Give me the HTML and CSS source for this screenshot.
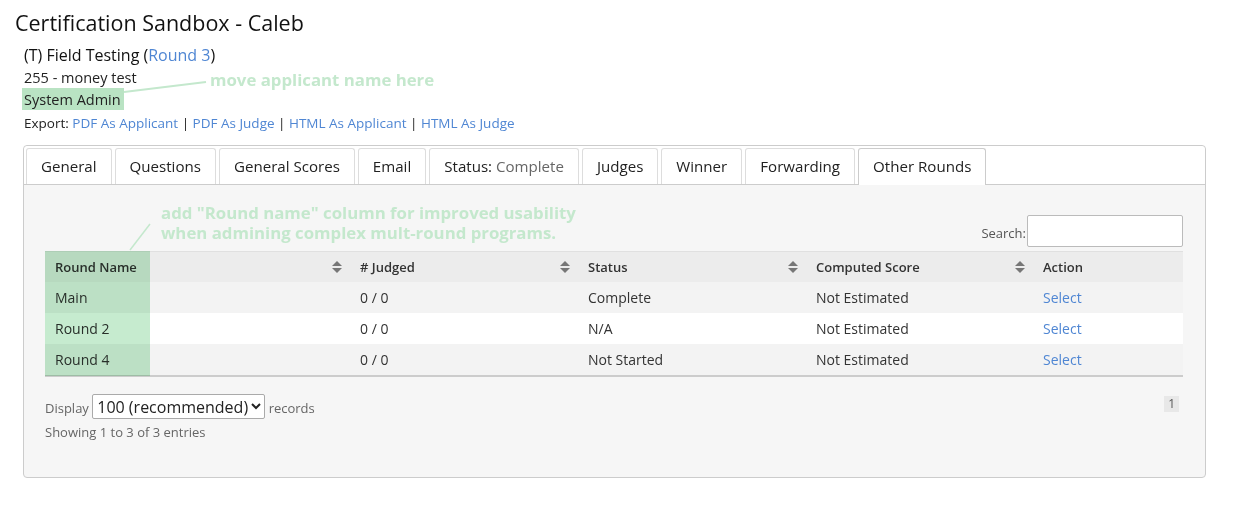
FILE: index.html
```html
<!DOCTYPE html>
<html lang="en">
<head>
    <meta charset="UTF-8">
    <title>Certification Sandbox - Caleb</title>
    <link rel="stylesheet" href="styles.css">
</head>
<body>
    <h1 class="title">Certification Sandbox - Caleb</h1>
    <div class="app-info">
        <h2>(T) Field Testing (<a href="#">Round 3</a>)</h2>
        <p>255 - money test</p>
        <p><span class="highlight">System Admin</span></p>
        <p class="export">Export: <a href="#">PDF As Applicant</a> | <a href="#">PDF As Judge</a> | <a href="#">HTML As Applicant</a> | <a href="#">HTML As Judge</a></p>
        <!-- annotation -->
        <svg class="note-line note-line-1" width="86" height="14"><line x1="2" y1="12" x2="84" y2="2" stroke="#c4e8cd" stroke-width="2"/></svg>
        <span class="note note-1">move applicant name here</span>
    </div>

    <div class="panel">
        <ul class="tabs">
            <li>General</li>
            <li>Questions</li>
            <li>General Scores</li>
            <li>Email</li>
            <li>Status: <span class="muted">Complete</span></li>
            <li>Judges</li>
            <li>Winner</li>
            <li>Forwarding</li>
            <li class="active">Other Rounds</li>
        </ul>
        <div class="panel-body">
            <div class="search-row">
                <label>Search:</label><input type="text">
            </div>
            <div class="table-wrap">
                <table class="rounds">
                    <thead>
                        <tr>
                            <th class="c1">Round Name<span class="sort"></span></th>
                            <th class="c2"># Judged<span class="sort"></span></th>
                            <th class="c3">Status<span class="sort"></span></th>
                            <th class="c4">Computed Score<span class="sort"></span></th>
                            <th class="c5">Action</th>
                        </tr>
                    </thead>
                    <tbody>
                        <tr class="odd"><td>Main</td><td>0 / 0</td><td>Complete</td><td>Not Estimated</td><td><a href="#">Select</a></td></tr>
                        <tr><td>Round 2</td><td>0 / 0</td><td>N/A</td><td>Not Estimated</td><td><a href="#">Select</a></td></tr>
                        <tr class="odd"><td>Round 4</td><td>0 / 0</td><td>Not Started</td><td>Not Estimated</td><td><a href="#">Select</a></td></tr>
                    </tbody>
                </table>
                <div class="col-mark"></div>
            </div>
            <div class="table-foot">
                <div>
                    <div class="length">Display <select><option>100 (recommended)</option></select> records</div>
                    <div class="info">Showing 1 to 3 of 3 entries</div>
                </div>
                <span class="page">1</span>
            </div>
            <!-- annotation -->
            <svg class="note-line note-line-2" width="24" height="30"><line x1="2" y1="28" x2="22" y2="2" stroke="#c4e8cd" stroke-width="1.5"/></svg>
            <span class="note note-2">add "Round name" column for improved usability<br>when admining complex mult-round programs.</span>
        </div>
    </div>
</body>
</html>
```

FILE: styles.css
```css
body {
    margin: 0;
    padding: 10px 15px;
    font-family: "Open Sans", "Liberation Sans", sans-serif;
    color: #222;
    background: #fff;
}

a {
    color: #4f86d3;
    text-decoration: none;
}

.title {
    margin: 0;
    font-size: 21.5px;
    font-weight: 400;
    line-height: 26px;
    color: #111;
}

.app-info {
    position: relative;
    padding: 7px 9px 0;
}

.app-info h2 {
    margin: 0;
    font-size: 16px;
    font-weight: 400;
    line-height: 24px;
    color: #111;
}

.app-info p {
    margin: 0;
    font-size: 14.5px;
    line-height: 21px;
    color: #222;
}

.highlight {
    display: inline-block;
    background: #b9e3c3;
    padding: 1px 3px 0 2px;
    margin-left: -2px;
}

.app-info p.export {
    margin-top: 3px;
    font-size: 13.5px;
}

.note {
    position: absolute;
    color: #c4e8cd;
    font-weight: 700;
    font-size: 16.8px;
    line-height: 20px;
    white-space: nowrap;
}

.note-1 {
    left: 195px;
    top: 34px;
}

.note-line {
    position: absolute;
}

.note-line-1 {
    left: 107px;
    top: 44px;
}

.panel {
    margin: 11px 0 0 8px;
    width: 1181px;
    border: 1px solid #ccc;
    border-radius: 4px;
    background: #f6f6f6;
    height: 331px;
}

.tabs {
    display: flex;
    list-style: none;
    margin: 0;
    padding: 2px 2px 0;
    gap: 3px;
    background: #fff;
    border-bottom: 1px solid #ccc;
    border-radius: 4px 4px 0 0;
}

.tabs li {
    padding: 0 14px;
    height: 35px;
    line-height: 35px;
    font-size: 15.1px;
    color: #222;
    border: 1px solid #ddd;
    border-bottom: none;
    border-radius: 3px 3px 0 0;
    margin-bottom: -1px;
    background: #fff;
}

.tabs li.active {
    border-color: #ccc;
    height: 36px;
}

.muted {
    color: #666;
}

.panel-body {
    position: relative;
    padding: 30px 22px 0 21px;
}

.search-row {
    display: flex;
    justify-content: flex-end;
    align-items: flex-end;
    font-size: 13px;
    color: #555;
}

.search-row label {
    line-height: 18px;
    margin: 0 1px 5px 0;
}

.search-row input {
    width: 152px;
    height: 30px;
    border: 1px solid #bbb;
    border-radius: 2px;
    margin: 0;
    box-sizing: content-box;
    padding: 0 1px;
}

.table-wrap {
    position: relative;
    margin-top: 4px;
}

.rounds {
    width: 100%;
    border-collapse: collapse;
    font-size: 14px;
    color: #333;
    border-bottom: 2px solid #ccc;
}

.rounds th {
    position: relative;
    text-align: left;
    font-weight: 600;
    font-size: 13px;
    height: 30px;
    padding: 0 10px;
    background: #ececec;
    border-top: 1px solid #e0e0e0;
}

.rounds td {
    height: 31px;
    padding: 0 10px;
    background: #fff;
}

.rounds tr.odd td {
    background: #f3f3f3;
}

.rounds .c1 { width: 285px; }
.rounds .c2 { width: 208px; }
.rounds .c3 { width: 208px; }
.rounds .c4 { width: 207px; }

.sort {
    position: absolute;
    right: 8px;
    top: 9px;
    width: 10px;
    height: 12px;
}

.sort::before,
.sort::after {
    content: "";
    position: absolute;
    left: 0;
    border-left: 5px solid transparent;
    border-right: 5px solid transparent;
}

.sort::before {
    top: 0;
    border-bottom: 5px solid #777;
}

.sort::after {
    top: 7px;
    border-top: 5px solid #777;
}

.col-mark {
    position: absolute;
    left: 0;
    top: 0;
    width: 105px;
    height: 125px;
    background: #c6ebcf;
    mix-blend-mode: multiply;
    pointer-events: none;
}

.table-foot {
    display: flex;
    justify-content: space-between;
    align-items: flex-start;
    margin-top: 17px;
    font-size: 13px;
    color: #666;
}

.length select {
    font-family: "Open Sans", "Liberation Sans", sans-serif;
    font-size: 16px;
    color: #222;
    height: 25px;
    border: 1px solid #aaa;
    border-radius: 2px;
    background: #fff;
    padding: 0;
}

.info {
    margin-top: 4px;
}

.page {
    display: inline-block;
    padding: 0 4px;
    margin: 2px 4px 0 0;
    font-size: 12px;
    line-height: 16px;
    background: #e8e8e8;
    color: #555;
}

.note-2 {
    left: 137px;
    top: 18px;
}

.note-line-2 {
    left: 104px;
    top: 37px;
}
```
